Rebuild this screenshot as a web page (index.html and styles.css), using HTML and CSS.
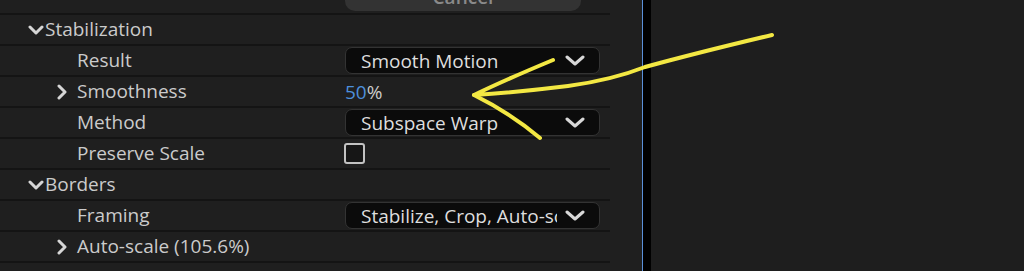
FILE: index.html
```html
<!DOCTYPE html>
<html lang="en">
<head>
<meta charset="utf-8">
<title>Warp Stabilizer</title>
<link rel="stylesheet" href="styles.css">
</head>
<body>
<div class="app">
  <div class="panel">
    <div class="rows">
      <div class="row-top">
        <div class="btn">Cancel</div>
      </div>

      <div class="row">
        <div class="label group">
          <span class="twisty twisty-group"><svg class="chev-down" viewBox="0 0 16 10"><path d="M2 2 L8 8 L14 2"/></svg></span>Stabilization
        </div>
        <div class="value"></div>
      </div>

      <div class="row">
        <div class="label param"><span class="twisty"></span>Result</div>
        <div class="value">
          <div class="dropdown"><span class="dd-text">Smooth Motion</span><svg class="dd-chev" viewBox="0 0 20 11"><path d="M2 2 L10 9 L18 2"/></svg></div>
        </div>
      </div>

      <div class="row">
        <div class="label param"><span class="twisty"><svg class="chev-right" viewBox="0 0 10 16"><path d="M2 2 L8 8 L2 14"/></svg></span>Smoothness</div>
        <div class="value"><span class="num">50</span>%</div>
      </div>

      <div class="row">
        <div class="label param"><span class="twisty"></span>Method</div>
        <div class="value">
          <div class="dropdown"><span class="dd-text">Subspace Warp</span><svg class="dd-chev" viewBox="0 0 20 11"><path d="M2 2 L10 9 L18 2"/></svg></div>
        </div>
      </div>

      <div class="row">
        <div class="label param"><span class="twisty"></span>Preserve Scale</div>
        <div class="value"><span class="checkbox"></span></div>
      </div>

      <div class="row">
        <div class="label group">
          <span class="twisty twisty-group"><svg class="chev-down" viewBox="0 0 16 10"><path d="M2 2 L8 8 L14 2"/></svg></span>Borders
        </div>
        <div class="value"></div>
      </div>

      <div class="row">
        <div class="label param"><span class="twisty"></span>Framing</div>
        <div class="value">
          <div class="dropdown"><span class="dd-text">Stabilize, Crop, Auto-scale</span><svg class="dd-chev" viewBox="0 0 20 11"><path d="M2 2 L10 9 L18 2"/></svg></div>
        </div>
      </div>

      <div class="row">
        <div class="label param"><span class="twisty"><svg class="chev-right" viewBox="0 0 10 16"><path d="M2 2 L8 8 L2 14"/></svg></span>Auto-scale (105.6%)</div>
        <div class="value"></div>
      </div>

      <div class="row row-partial">
        <div class="label param"><span class="twisty"></span><svg class="watch" viewBox="0 0 20 20"><path d="M7 2 H13 M10 2 V5 M10 5 A7 7 0 1 0 10.01 5"/></svg>Additional Scale</div>
        <div class="value"></div>
      </div>
    </div>
  </div>
  <div class="divider"></div>
  <div class="strip"></div>
  <div class="viewer"></div>

  <svg class="annot" viewBox="0 0 1024 271" width="1024" height="271">
    <path d="M553 60 Q505 80 474 95 Q520 92 568 86 Q612 80 645 67 Q700 52 772 35"/>
    <path d="M474 95 Q512 114 540 138"/>
  </svg>
</div>
</body>
</html>
```

FILE: styles.css
```css
* { box-sizing: border-box; }

html, body {
  margin: 0;
  padding: 0;
  background: #1e1e1e;
  overflow: hidden;
}

body {
  font-family: "Open Sans", "Liberation Sans", sans-serif;
  font-size: 19px;
  color: #cbcbcb;
}

.app {
  position: relative;
  display: flex;
  width: 1024px;
  height: 271px;
  overflow: hidden;
}

.panel {
  width: 642px;
  background: #1f1f1f;
  flex: none;
}

.rows {
  width: 610px;
  display: flex;
  flex-direction: column;
}

.row-top {
  flex: none;
  height: 15px;
  padding-left: 345px;
  border-bottom: 2px solid #141414;
  overflow: hidden;
}

.btn {
  width: 236px;
  height: 28px;
  margin-top: -17px;
  border-radius: 10px;
  background: #333333;
  color: #8a8a8a;
  font-weight: 600;
  text-align: center;
  line-height: 28px;
}

.row {
  display: grid;
  grid-template-columns: 345px 255px;
  height: 31px;
  border-bottom: 2px solid #141414;
  align-items: center;
  flex: none;
}

.row-partial {
  align-items: start;
  padding-top: 2px;
  border-bottom: none;
}

.label {
  display: flex;
  align-items: center;
  white-space: nowrap;
  line-height: 29px;
}

.group { padding-left: 28px; }
.param { padding-left: 57px; }

.twisty {
  display: inline-flex;
  align-items: center;
  width: 20px;
  height: 29px;
  flex: none;
}

.twisty-group { width: 17px; }

.chev-down {
  width: 16px;
  height: 10px;
  fill: none;
  stroke: #d6d6d6;
  stroke-width: 3;
  stroke-linecap: round;
  stroke-linejoin: round;
}

.chev-right {
  width: 10px;
  height: 16px;
  fill: none;
  stroke: #d6d6d6;
  stroke-width: 3;
  stroke-linecap: round;
  stroke-linejoin: round;
}

.watch {
  width: 18px;
  height: 18px;
  margin-right: 6px;
  margin-left: -14px;
  fill: none;
  stroke: #c6c6c6;
  stroke-width: 1.6;
}

.value {
  display: flex;
  align-items: center;
  white-space: nowrap;
}

.dropdown {
  display: flex;
  align-items: center;
  width: 255px;
  height: 27px;
  padding: 0 14px 0 15px;
  border: 1px solid #333333;
  border-radius: 7px;
  background: #0b0b0b;
  color: #dedede;
}

.dd-text {
  flex: 1;
  overflow: hidden;
  white-space: nowrap;
}

.dd-chev {
  width: 20px;
  height: 11px;
  margin-left: 8px;
  flex: none;
  fill: none;
  stroke: #d8d8d8;
  stroke-width: 3;
  stroke-linecap: round;
  stroke-linejoin: round;
}

.num { color: #4d8fdc; }

.checkbox {
  display: block;
  width: 21px;
  height: 21px;
  margin-left: -1px;
  border: 2.5px solid #c2c2c2;
  border-radius: 3px;
  background: #161616;
}

.divider {
  width: 1px;
  background: #5a8fd8;
  flex: none;
}

.strip {
  width: 8px;
  background: #000000;
  flex: none;
}

.viewer {
  flex: 1;
  background: #1e1e1e;
}

.annot {
  position: absolute;
  left: 0;
  top: 0;
  pointer-events: none;
  fill: none;
  stroke: #f3e843;
  stroke-width: 4;
  stroke-linecap: round;
  stroke-linejoin: round;
}
```
